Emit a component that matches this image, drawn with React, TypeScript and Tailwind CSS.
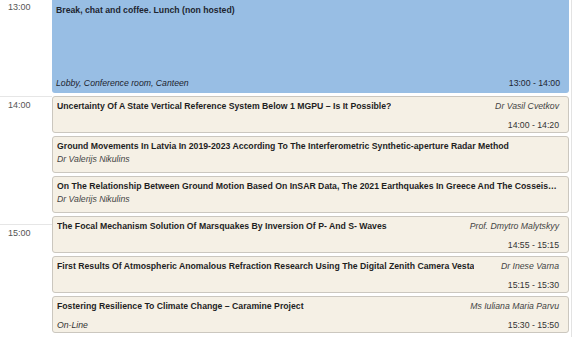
import React from 'react';

type Talk = {
  title: string;
  speaker?: string;
  speakerBelow?: boolean;
  place?: string;
  time?: string;
};

const talks: Talk[] = [
  { title: 'Uncertainty Of A State Vertical Reference System Below 1 MGPU – Is It Possible?', speaker: 'Dr Vasil Cvetkov', time: '14:00 - 14:20' },
  { title: 'Ground Movements In Latvia In 2019-2023 According To The Interferometric Synthetic-aperture Radar Method', speaker: 'Dr Valerijs Nikulins', speakerBelow: true },
  { title: 'On The Relationship Between Ground Motion Based On InSAR Data, The 2021 Earthquakes In Greece And The Cosseismic Deformation Analysis', speaker: 'Dr Valerijs Nikulins', speakerBelow: true },
  { title: 'The Focal Mechanism Solution Of Marsquakes By Inversion Of P- And S- Waves', speaker: 'Prof. Dmytro Malytskyy', time: '14:55 - 15:15' },
  { title: 'First Results Of Atmospheric Anomalous Refraction Research Using The Digital Zenith Camera Vesta', speaker: 'Dr Inese Varna', time: '15:15 - 15:30' },
  { title: 'Fostering Resilience To Climate Change – Caramine Project', speaker: 'Ms Iuliana Maria Parvu', place: 'On-Line', time: '15:30 - 15:50' },
];

function TalkCard({ t }: { t: Talk }) {
  return (
    <div className="h-[37px] shrink-0 overflow-hidden rounded-[3px] border border-[#cbc7bf] bg-[#f5f0e5] px-[4px] pt-[3px] text-[8.7px] leading-[13px] text-[#1e1e1e]">
      {t.speakerBelow ? (
        <>
          <div className="truncate pr-[4px] font-bold">{t.title}</div>
          <div className="italic text-[#444]">{t.speaker}</div>
        </>
      ) : (
        <>
          <div className="flex justify-between gap-2">
            <span className="truncate font-bold">{t.title}</span>
            <span className="shrink-0 pr-[5px] italic text-[#444]">{t.speaker}</span>
          </div>
          <div className="mt-[6px] flex justify-between">
            <span className="italic text-[#333]">{t.place}</span>
            <span className="pr-[5px] text-[#333]">{t.time}</span>
          </div>
        </>
      )}
    </div>
  );
}

export default function App() {
  return (
    <div className="flex h-[337px] w-[573px] overflow-hidden bg-white font-['Liberation_Sans',Arial,sans-serif]">
      {/* hour labels */}
      <div className="flex w-[52px] shrink-0 flex-col text-[9px] text-[#555]">
        <div className="h-[96px] pl-[8px] pt-[1px]">13:00</div>
        <div className="h-[128px] border-t border-[#e6e6e6] pl-[8px] pt-[2px]">14:00</div>
        <div className="flex-1 border-t border-[#e6e6e6] pl-[8px] pt-[2px]">15:00</div>
      </div>

      {/* sessions */}
      <div className="flex w-[517px] flex-col gap-[3px]">
        <div className="flex h-[93px] shrink-0 flex-col justify-between rounded-b-[3px] bg-[#98bee4] px-[4px] pb-[3px] pt-[4px] text-[8.7px] leading-[13px] text-[#1d2530]">
          <div className="font-bold">Break, chat and coffee. Lunch (non hosted)</div>
          <div className="flex justify-between">
            <span className="italic">Lobby, Conference room, Canteen</span>
            <span className="pr-[5px]">13:00 - 14:00</span>
          </div>
        </div>
        {talks.map((t) => (
          <TalkCard key={t.title} t={t} />
        ))}
      </div>
      <div className="ml-[2px] w-px bg-[#e3e3e3]" />
    </div>
  );
}
